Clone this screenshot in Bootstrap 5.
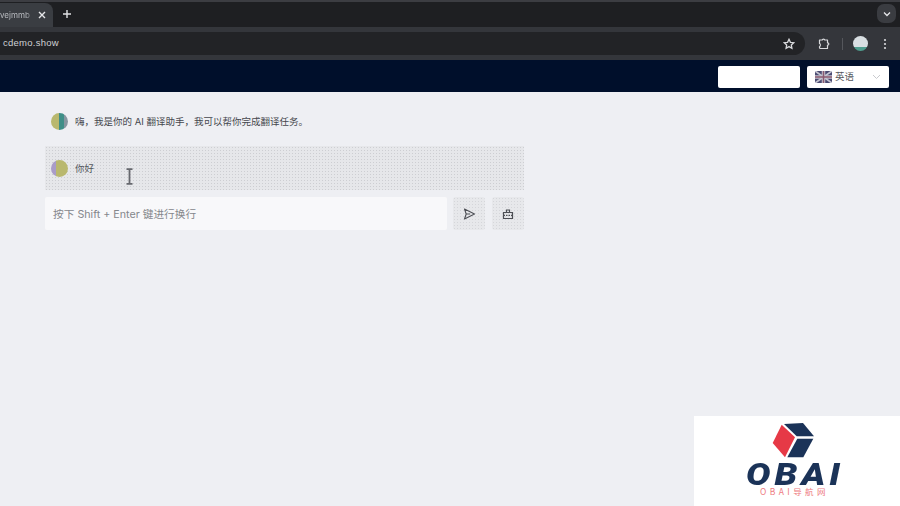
<!doctype html>
<html lang="zh">
<head>
<meta charset="utf-8">
<title>AI 翻译助手</title>
<link href="https://cdn.jsdelivr.net/npm/bootstrap@5.3.0/dist/css/bootstrap.min.css" rel="stylesheet">
<style>
html,body{height:100%;overflow:hidden}
body{font-family:"Inter","Noto Sans CJK SC",sans-serif;background:#eeeff3;color:#4a4c52;font-size:9.5px;display:flex;flex-direction:column;height:506px}
.tabstrip{height:27px;background:#1e1f22;border-top:2px solid #3c3d42;flex:none}
.active-tab{width:53px;height:24px;background:#3a3d42;border-top-right-radius:8px;color:#c6c8cc;font-size:8px;padding-right:7px;padding-bottom:1px}
.tab-title{overflow:hidden;white-space:nowrap;color:#b9bbc0;flex:1;-webkit-mask-image:linear-gradient(90deg,#000 65%,transparent)}
.new-tab{margin-left:9px;margin-bottom:3px;width:10px;height:10px}
.tab-list{width:19px;height:19px;background:#3a3c41;border-radius:7px;margin-right:4px;margin-bottom:2px}
.toolbar{height:33px;background:#34363b;flex:none;padding:5px 0}
.omni{width:805px;height:23px;background:#222326;border-radius:0 12px 12px 0;color:#cfd1d5;font-size:9.5px;font-family:"Liberation Sans",sans-serif;padding:0 10px 0 3px;letter-spacing:.25px}
.tool-puzzle{margin-left:13px}
.sep{width:1px;height:12px;background:#55575c;margin-left:11px}
.pic{width:15px;height:15px;border-radius:50%;background:linear-gradient(#d8dee2 0 72%,#4f9c8e 72%);margin-left:10px}
.tool-dots{margin-left:15px}
.appbar{height:32px;background:#000f2b;flex:none;padding:6px 11px 4px 0;gap:7px}
.blank-box{width:82px;height:22px;background:#fff;border-radius:2px}
.lang-box{width:82px;height:22px;background:#fff;border-radius:2px;padding:0 8px;color:#55575d;font-size:9.5px;gap:3px}
.chat-wrap{width:479px;margin-left:45px}
.msg-line{height:54px;padding:4px 0 0 6px;gap:7px;color:#45474d}
.msg-text{padding-top:2px}
.msg-user{height:44px;background-color:#e6e7ea;background-image:radial-gradient(#cdced2 .8px,transparent 1px);background-size:3px 3px;padding-left:6px;gap:7px;color:#55575d;position:relative}
.ava{width:17px;height:17px;border-radius:50%;flex:none}
.ava-bot{background:linear-gradient(90deg,#b9b86e 0 50%,#3f8f88 50% 76%,#8796a0 76%)}
.ava-user{background:linear-gradient(90deg,#a99cc8 0 30%,#b9b86e 30%)}
.cursor-i{position:absolute;left:80px;top:22px}
.input-row{margin-top:7px}
.fake-input{flex:1;height:33px;background:#f8f8fa;color:#85878c;font-size:10.7px;padding:3px 0 0 8px;border-radius:2px}
.square-btn{width:32px;height:33px;background-color:#e7e8eb;background-image:radial-gradient(#d5d6da .7px,transparent .9px);background-size:3px 3px;border-radius:3px;margin-left:6px}
.square-btn + .square-btn{margin-left:7px}
.brandmark{position:absolute;right:0;bottom:0;width:206px;height:90px;background:#fff}
.brand-cube{margin-top:7px}
.brand-name{font-family:"Roboto",sans-serif;font-weight:900;font-style:italic;font-size:32px;line-height:24px;color:#1b3358;letter-spacing:3.5px;margin:3px 5px 0 0;height:24px;transform:scaleX(1.14)}
.brand-sub{font-family:"Noto Sans CJK SC",sans-serif;font-size:8.5px;line-height:10px;color:#ee7a80;letter-spacing:3.4px;margin-right:5px}
</style>
</head>
<body>
<div class="tabstrip d-flex align-items-center justify-content-between">
  <div class="d-flex align-items-center align-self-end">
    <div class="active-tab d-flex align-items-center">
      <span class="tab-title">vejmmb</span>
      <svg width="8" height="8" viewBox="0 0 8 8"><path d="M1 1l6 6M7 1L1 7" stroke="#e6e7ea" stroke-width="1.4"/></svg>
    </div>
    <svg class="new-tab" viewBox="0 0 10 10"><path d="M5 1v8M1 5h8" stroke="#e0e1e4" stroke-width="1.4"/></svg>
  </div>
  <div class="tab-list d-flex align-items-center justify-content-center">
    <svg width="8" height="6" viewBox="0 0 8 6"><path d="M1 1.500l3 3 3-3" fill="none" stroke="#e6e7ea" stroke-width="1.300"/></svg>
  </div>
</div>
<div class="toolbar d-flex align-items-center">
  <div class="omni d-flex align-items-center justify-content-between">
    <span>cdemo.show</span>
    <svg width="12" height="12" viewBox="0 0 12 12"><path d="M6 1.300l1.400 3 3.300.400-2.400 2.200.6 3.300L6 8.600 3.100 10.200l.6-3.300L1.300 4.700l3.300-.4z" fill="none" stroke="#d8d9dc" stroke-width="1.300"/></svg>
  </div>
  <svg class="tool-puzzle" width="13" height="12" viewBox="0 0 13 12"><path d="M1.500 2h2.800c0-1.300 2.400-1.300 2.400 0h2.800v2.800c1.800 0 1.800 2.400 0 2.400v3.300H2.500c-.6 0-1-.4-1-1V8.500c1.200 0 1.200-3 0-3z" fill="none" stroke="#d8d9dc" stroke-width="1.200" stroke-linejoin="round"/></svg>
  <span class="sep"></span>
  <span class="pic"></span>
  <svg class="tool-dots" width="4" height="12" viewBox="0 0 4 12"><circle cx="2" cy="2" r="1.100" fill="#d8d9dc"/><circle cx="2" cy="6" r="1.100" fill="#d8d9dc"/><circle cx="2" cy="10" r="1.100" fill="#d8d9dc"/></svg>
</div>
<div class="appbar d-flex justify-content-end">
  <div class="blank-box"></div>
  <div class="lang-box d-flex align-items-center">
    <svg width="17" height="12" viewBox="0 0 17 12"><rect width="17" height="12" fill="#4a4a72"/><path d="M0 0l17 12M17 0L0 12" stroke="#c4c4d0" stroke-width="1.800"/><path d="M8.500 0v12M0 6h17" stroke="#c4c4d0" stroke-width="3.500"/><path d="M8.500 0v12M0 6h17" stroke="#8a5a70" stroke-width="1.500"/></svg>
    <span>英语</span>
    <svg class="ms-auto" width="9" height="6" viewBox="0 0 9 6"><path d="M1 1l3.500 3.500L8 1" fill="none" stroke="#c9cace" stroke-width="1"/></svg>
  </div>
</div>
<main class="chat-wrap">
  <div class="msg-line d-flex align-items-center">
    <span class="ava ava-bot"></span>
    <span class="msg-text">嗨，我是你的 AI 翻译助手，我可以帮你完成翻译任务。</span>
  </div>
  <div class="msg-user d-flex align-items-center">
    <span class="ava ava-user"></span>
    <span class="msg-text">你好</span>
    <svg class="cursor-i" width="9" height="17" viewBox="0 0 9 17"><path d="M1.500 1.200h6M1.500 15.800h6M4.500 1v15" stroke="#66686e" stroke-width="1.800" fill="none"/></svg>
  </div>
  <div class="input-row d-flex">
    <div class="fake-input d-flex align-items-center">按下 Shift + Enter 键进行换行</div>
    <div class="square-btn d-flex align-items-center justify-content-center">
      <svg width="12" height="12" viewBox="0 0 12 12"><path d="M1.500 1L11.500 6l-10 5L3.200 6zM3.200 6h4" fill="none" stroke="#4d4f55" stroke-width="1.100" stroke-linejoin="round"/></svg>
    </div>
    <div class="square-btn d-flex align-items-center justify-content-center">
      <svg width="12" height="12" viewBox="0 0 12 12"><path d="M1.500 4.500h9v6h-9zM4.500 4.500V2h3v2.500" fill="none" stroke="#4d4f55" stroke-width="1.200"/><path d="M1.500 7.300h9" stroke="#4d4f55" stroke-width="1.200" stroke-dasharray="1.500 1"/></svg>
    </div>
  </div>
</main>
<aside class="brandmark d-flex flex-column align-items-center">
  <svg class="brand-cube" width="50" height="36" viewBox="772 423 50 36"><path d="M772.700 443L781.700 424.700 795 437.300 785 457.300z" fill="#e63946"/><path d="M784 424L803 423 814 436.300H796.700z" fill="#1b3358"/><path d="M797.300 438.700H813.300L803.300 457.300H787.300z" fill="#1b3358"/></svg>
  <div class="brand-name">OBAI</div>
  <div class="brand-sub">OBAI导航网</div>
</aside>
<script src="https://cdn.jsdelivr.net/npm/bootstrap@5.3.0/dist/js/bootstrap.bundle.min.js"></script>
</body>
</html>
